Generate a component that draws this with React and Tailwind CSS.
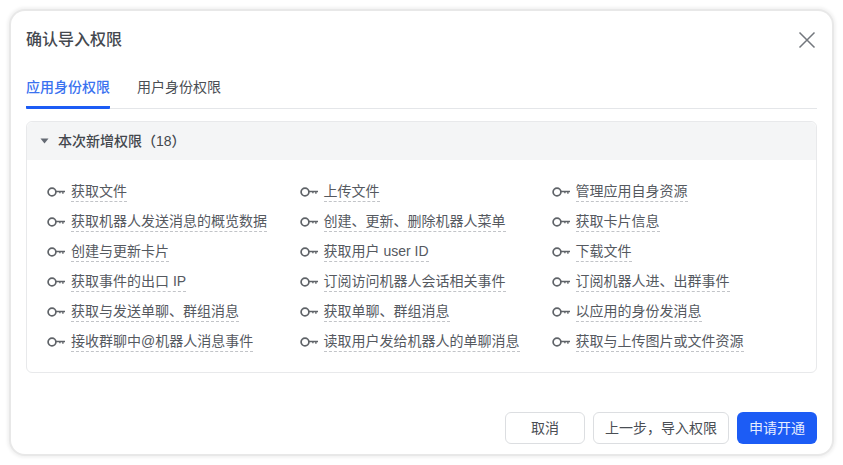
import React from 'react'

const perms = [
  '获取文件', '上传文件', '管理应用自身资源',
  '获取机器人发送消息的概览数据', '创建、更新、删除机器人菜单', '获取卡片信息',
  '创建与更新卡片', '获取用户 user ID', '下载文件',
  '获取事件的出口 IP', '订阅访问机器人会话相关事件', '订阅机器人进、出群事件',
  '获取与发送单聊、群组消息', '获取单聊、群组消息', '以应用的身份发消息',
  '接收群聊中@机器人消息事件', '读取用户发给机器人的单聊消息', '获取与上传图片或文件资源',
]

function Key() {
  return (
    <svg width="18" height="10" viewBox="0 0 18 10" fill="none" className="shrink-0">
      <circle cx="5" cy="5" r="3.9" stroke="#5f6368" strokeWidth="1.7" />
      <path d="M9 3.8H18V5.2H16.6V6.8H15.2V5.2H13.6V6.2H12.2V5.2H9Z" fill="#5f6368" />
    </svg>
  )
}

export default function App() {
  return (
    <div className="h-[465px] w-[843px] bg-white p-[11px] font-['Liberation_Sans','Noto_Sans_CJK_SC',sans-serif] text-[#2b2f36]">
      <div className="flex h-[443px] w-[821px] flex-col rounded-[14px] bg-white px-[15px] shadow-[0_0_0_2px_#e8e8e8,0_0_3px_4px_#f3f3f3]">
        <div className="flex h-[57px] items-center justify-between pt-[1px]">
          <span className="text-[16px] font-medium text-[#45494f]">确认导入权限</span>
          <svg width="18" height="18" viewBox="0 0 18 18" fill="none" className="mr-[1px]">
            <path d="M1.5 1.5L16.5 16.5M16.5 1.5L1.5 16.5" stroke="#73777d" strokeWidth="1.5" />
          </svg>
        </div>

        <div className="flex h-[41px] gap-[27px] border-b border-[#e4e6e9] text-[14px]">
          <div className="-mb-px flex items-center rounded-b-[1px] border-b-[3px] border-[#1c5cf5] pt-[1px] font-medium text-[#3a72f0]">应用身份权限</div>
          <div className="flex items-center pb-[3px] pt-[1px] text-[#4a4e54]">用户身份权限</div>
        </div>

        <div className="mt-[12px] h-[252px] rounded-[6px] border border-[#e8e9eb]">
          <div className="flex h-[38px] items-center gap-[9px] rounded-t-[6px] bg-[#f4f5f6] pl-[13px] text-[14px] font-medium text-[#43474d]">
            <svg width="9" height="6" viewBox="0 0 9 6">
              <path d="M0.5 0.5H8.5L4.5 5.5Z" fill="#646a73" />
            </svg>
            <span>本次新增权限（18）</span>
          </div>
          <div className="grid grid-cols-[252.5px_252px_1fr] pl-[20px] pt-[17px]">
            {perms.map((p) => (
              <div key={p} className="flex h-[30px] items-center gap-[6px] text-[14px] text-[#55595f]">
                <Key />
                <span className="border-b border-dashed border-[#c2c4c8] leading-[19px]">{p}</span>
              </div>
            ))}
          </div>
        </div>

        <div className="mt-[39px] flex justify-end gap-[8px] text-[14px]">
          <button className="h-[32px] w-[80px] rounded-[6px] border border-[#dcdee1] text-[#4a4e54]">取消</button>
          <button className="h-[32px] w-[136px] rounded-[6px] border border-[#dcdee1] text-[#4a4e54]">上一步，导入权限</button>
          <button className="h-[32px] w-[80px] rounded-[6px] bg-[#1c5cf5] text-[#e6edff]">申请开通</button>
        </div>
      </div>
    </div>
  )
}
